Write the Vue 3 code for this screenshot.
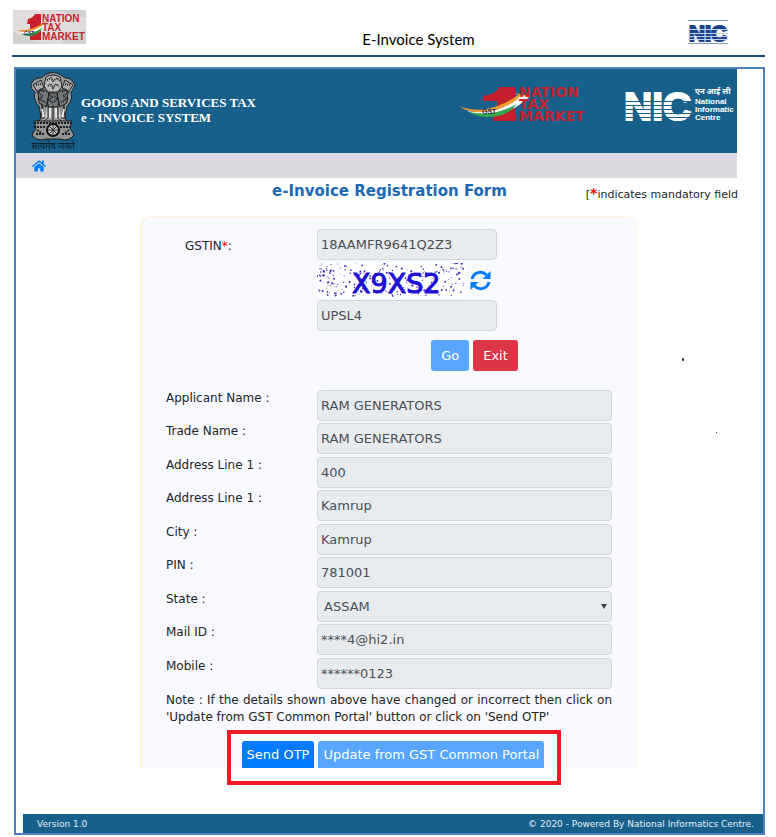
<script setup>
import { ref } from 'vue'

const gstin = ref('18AAMFR9641Q2Z3')
const captcha = ref('UPSL4')

const fields = [
  { id: 'applicant', label: 'Applicant Name :', value: 'RAM GENERATORS' },
  { id: 'trade', label: 'Trade Name :', value: 'RAM GENERATORS' },
  { id: 'address1', label: 'Address Line 1 :', value: '400' },
  { id: 'address2', label: 'Address Line 1 :', value: 'Kamrup' },
  { id: 'city', label: 'City :', value: 'Kamrup' },
  { id: 'pin', label: 'PIN :', value: '781001' },
  { id: 'state', label: 'State :', value: 'ASSAM', select: true },
  { id: 'mail', label: 'Mail ID :', value: '****4@hi2.in' },
  { id: 'mobile', label: 'Mobile :', value: '******0123' },
]

// Deterministic speckle noise behind the captcha characters
let seed = 41
const rand = () => {
  seed = (seed * 16807) % 2147483647
  return seed / 2147483647
}
const dots = Array.from({ length: 220 }, () => ({
  x: rand() * 147,
  y: rand() * 33,
  r: 0.4 + rand() * 0.7,
}))
</script>

<template>
  <div class="page">
    <header class="doc-head">
      <svg class="doc-logo" width="73" height="34" viewBox="0 0 73 34" role="img" aria-label="Nation Tax Market">
        <rect width="73" height="34" fill="#dfdcdb" />
        <path d="M0 22L18 30L36 34H0ZM40 0L73 8V0ZM52 28L73 20V34H48Z" fill="#d3d0d0" />
        <path d="M15 9Q20 8 22 4H28V30H17V14H14Z" fill="#cb1f2c" />
        <path d="M4 20Q18 22 33 11L31 16Q19 27 4 20Z" fill="#f08b25" />
        <path d="M6 22Q20 23 33 13L30 19Q19 28 6 22Z" fill="#fff" />
        <path d="M8 24Q20 25 30 17Q22 31 8 24Z" fill="#2d9a45" />
        <g fill="#c52431" font-family="Liberation Sans, sans-serif" font-weight="700" font-size="10">
          <text x="29" y="12">NATION</text><text x="29" y="21">TAX</text><text x="29" y="30">MARKET</text>
        </g>
        <text x="11" y="25" fill="#26336f" font-family="Liberation Sans, sans-serif" font-weight="700" font-size="5">GST</text>
      </svg>
      <h1>E-Invoice System</h1>
      <svg class="doc-nic" width="40" height="24" viewBox="0 0 40 24" role="img" aria-label="NIC">
        <text x="1" y="21" fill="#1b438b" stroke="#1b438b" stroke-width="2" font-family="Liberation Sans, sans-serif" font-weight="700" font-size="22">NIC</text>
        <path d="M0 .5H40M0 23.5H40" stroke="#7d9ac8" />
        <path d="M0 9.5H40M0 13.5H40M0 16.5H40M0 19.5H40" stroke="#c3d1e6" />
      </svg>
    </header>

    <div class="frame">
      <div class="banner">
        <svg class="emblem" width="48" height="80" viewBox="0 0 48 80" role="img" aria-label="National emblem">
          <g stroke="#1d1f20" stroke-width="1">
            <path d="M16 3Q24-2 32 3L36 6Q42 5 46 13Q44 18 42 20Q44 29 38 34L36 46L39 51H9L12 46L10 34Q4 29 6 20Q1 17 2 12Q6 5 12 6Z" fill="#96999a" />
            <path d="M17 5Q24 1 31 5L33 14L29 20H19L15 14Z" fill="#b8b9b8" />
            <path d="M4 13L12 8L15 16L8 19ZM44 13L36 8L33 16L40 19Z" fill="#aaa" />
            <path d="M9 20Q16 15 20 22L17 35L10 31ZM39 20Q32 15 28 22L31 35L38 31ZM20 21H28L30 35H18Z" fill="#74787a" />
            <path d="M13 33L16 46H12ZM19 32V46L15 49M24 33V48M29 32V46L33 49M35 33L32 46H36Z" fill="#d2d2cf" />
          </g>
          <path d="M8 20L14 24L10 27L16 30M40 20L34 24L38 27L32 30M20 22L23 25L20 28L24 31L28 27L25 23M18 8L22 6L24 9L28 6L31 9M19 14L22 12L24 16L27 12L30 14M7 13L12 12M41 13L36 12M11 17L15 20M37 17L33 20" fill="none" stroke="#222" stroke-width="2" stroke-dasharray="1 1" />
          <path d="M13 37L15 45M21 36V46M27 36V46M35 37L33 45" stroke="#e5e5e0" stroke-width="2" />
          <path d="M5 49H43L41 56L45 63Q40 70 31 67H17Q8 70 3 63L7 56Z" fill="#929594" stroke="#191b1c" />
          <path d="M5 51H43M5 55H17M31 55H43M7 62H15M33 62H41M8 58L12 61M40 58L36 61" stroke="#1c1e1f" stroke-width="2" stroke-dasharray="2 1" />
          <circle cx="24" cy="58" r="6" fill="#c4c5c3" stroke="#111" stroke-width="2" />
          <path d="M24 53V63M19 58H29M20 54L28 62M28 54L20 62" stroke="#333" stroke-width="1" />
          <text x="24" y="77" text-anchor="middle" font-size="9" fill="#111820" font-family="Noto Sans Devanagari, Noto Sans, sans-serif">सत्यमेव जयते</text>
        </svg>
        <p class="brand">GOODS AND SERVICES TAX<br />e - INVOICE SYSTEM</p>
        <svg class="market" width="154" height="38" viewBox="0 0 154 38" role="img" aria-label="GST Nation Tax Market">
          <path d="M25 10Q39 8 41 1H57V28H58V35H35V28H39V15H25Z" fill="#c51f2d" />
          <path d="M1 20Q21 28 42 19Q54 14 60 9L56 7L72 10L67 15L64 12Q48 25 27 27Q10 27 1 20Z" fill="#f19a31" />
          <path d="M9 25Q31 29 48 20Q58 16 62 10L71 11L66 15Q52 28 28 29Q17 29 9 25Z" fill="#fff" />
          <path d="M11 26Q36 31 59 18Q48 32 28 31Q17 30 11 26Z" fill="#36a64b" />
          <text x="24" y="28" font-family="Liberation Sans, sans-serif" font-size="7" font-weight="700" fill="#252e65">GST</text>
          <g fill="#c5212f" font-family="DejaVu Sans, sans-serif" font-weight="700" font-size="14">
            <text x="61" y="11">NATION</text><text x="61" y="23">TAX</text><text x="61" y="35">MARKET</text>
          </g>
        </svg>
        <svg class="nic" width="113" height="42" viewBox="0 0 113 42" role="img" aria-label="NIC National Informatics Centre">
          <text x="0" y="38" fill="#fff" stroke="#fff" stroke-width="2" font-family="Liberation Sans, sans-serif" font-weight="700" font-size="39">NIC</text>
          <path d="M0 19.500H69M0 23.500H69M0 27.500H69M0 31.500H69M0 35.500H69" stroke="#17608b" />
          <g fill="#fff" font-family="Liberation Sans, sans-serif" font-weight="700" font-size="8">
            <text x="71" y="12" font-family="Noto Sans Devanagari, Noto Sans, sans-serif">एन आई सी</text>
            <text x="71" y="22">National</text><text x="71" y="30">Informatic</text><text x="71" y="38">Centre</text>
          </g>
        </svg>
      </div>
      <nav class="nav">
        <a href="#" aria-label="Home">
          <svg width="14" height="12" viewBox="0 0 576 448" fill="#007bff">
            <path d="M280 84L96 235V400Q96 416 112 416L224 415Q240 415 240 399V305Q240 289 256 289H320Q336 289 336 305V399Q336 416 352 416H464Q480 416 480 400V235L296 84Q288 79 280 84ZM571 187L488 118V-20Q488-32 476-32H420Q408-32 408-20V53L318-21Q288-43 258-21L4 187Q-4 195 2 204L28 235Q36 243 45 236L280 42Q288 37 296 42L531 236Q540 243 548 235L573 204Q580 195 571 187Z" transform="translate(0 32)" />
          </svg>
        </a>
      </nav>

      <main class="content">
        <div class="heading">
          <h2>e-Invoice Registration Form</h2>
          <span class="mandatory">[<b>*</b>indicates mandatory field</span>
        </div>
        <span class="speck speck-a"></span>
        <span class="speck speck-b"></span>

        <div class="card-wrap">
          <form class="card" @submit.prevent>
            <div class="row first">
              <label class="gst-label" for="gstin">GSTIN<b>*</b>:</label>
              <div class="verify">
                <input id="gstin" v-model="gstin" disabled />
                <div class="captcha">
                  <svg width="149" height="34" viewBox="0 0 149 34" role="img" aria-label="Captcha">
                    <rect width="149" height="34" fill="#fff" />
                    <circle v-for="(d, i) in dots" :key="i" :cx="d.x" :cy="d.y" :r="d.r" fill="#3d2fc0" />
                    <text x="35" y="30" font-family="DejaVu Sans, sans-serif" font-size="27" fill="#1c0fd6" stroke="#1c0fd6">X9XS2</text>
                  </svg>
                  <button type="button" class="refresh" aria-label="Refresh captcha">
                    <svg width="21" height="21" viewBox="0 0 21 21" fill="none" stroke="#007bff" stroke-width="3">
                      <path d="M2 9A8.5 8.5 0 0 1 16.5 5" /><path d="M19 12A8.5 8.5 0 0 1 4.500 16" />
                      <path d="M20.500 1V9H12.500ZM.5 20V12H8.500Z" fill="#007bff" stroke="none" />
                    </svg>
                  </button>
                </div>
                <input v-model="captcha" aria-label="Captcha text" disabled />
              </div>
            </div>
            <div class="actions">
              <button type="button" class="btn light">Go</button>
              <button type="button" class="btn danger">Exit</button>
            </div>

            <div class="fields">
              <div v-for="f in fields" :key="f.id" class="row">
                <label :for="f.id">{{ f.label }}</label>
                <div v-if="f.select" class="select">
                  <select :id="f.id" disabled><option>{{ f.value }}</option></select>
                  <span class="arrow"></span>
                </div>
                <input v-else :id="f.id" :value="f.value" disabled />
              </div>
            </div>
            <p class="note">Note : If the details shown above have changed or incorrect then click on 'Update from GST Common Portal' button or click on 'Send OTP'</p>
            <div class="submit">
              <button type="button" class="btn primary">Send OTP</button>
              <button type="button" class="btn light">Update from GST Common Portal</button>
              <span class="highlight"></span>
            </div>
          </form>
        </div>
      </main>
      <footer class="foot">
        <span>Version 1.0</span>
        <span>© 2020 - Powered By National Informatics Centre.</span>
      </footer>
    </div>
  </div>
</template>

<style>
body { margin: 0; background: #fff; }
</style>

<style scoped>
* { box-sizing: border-box; }
.page { padding: 0 11px 2px 12px; font-family: "DejaVu Sans", Verdana, sans-serif; color: #212529; }
.doc-head { display: grid; grid-template-columns: 1fr auto 1fr; align-items: start; padding: 10px 0 0; height: 57px; border-bottom: 2px solid #1f497d; }
.doc-logo { margin-left: 1px; }
.doc-head h1 { margin: 19px 0 0; padding-left: 60px; font: 400 15px/20px Lato, Calibri, sans-serif; color: #000; }
.doc-nic { justify-self: end; margin: 10px 37px 0 0; }
.frame { margin: 10px 0 0 2px; border: 2px solid #4f81bd; }
.banner { display: flex; align-items: flex-start; margin-right: 26px; padding: 3px 0 0 13px; height: 84px; background: #17608b; overflow: hidden; }
.emblem { flex: none; overflow: visible; }
.brand { margin: 23px 0 0 4px; font: 700 13px/15px "Liberation Serif", serif; color: #fff; white-space: nowrap; }
.market { flex: none; margin: 14px 12px 0 auto; }
.nic { flex: none; margin-top: 10px; }
.nav { display: flex; align-items: center; margin-right: 26px; padding-left: 16px; height: 25px; background: #d9dbe0; }
.nav a { display: flex; }
.content { position: relative; }
.heading { display: flex; align-items: flex-start; justify-content: space-between; padding: 4px 25px 0 256px; height: 38px; }
.heading h2 { margin: 0; font-size: 15px; line-height: 18px; color: #1a69b5; white-space: nowrap; }
.mandatory { padding-top: 4px; font-size: 11px; line-height: 18px; white-space: nowrap; }
.mandatory b { font-size: 14px; line-height: 1; color: #f00; }
.speck { position: absolute; border-radius: 50%; background: #111; }
.speck-a { top: 180px; right: 79px; width: 2px; height: 3px; }
.speck-b { top: 254px; right: 46px; width: 1px; height: 1px; }
.card-wrap { padding: 0 126px 0 124px; }
.card { padding: 12px 24px 0; border: solid #fcf2dc; border-width: 1px 1px 0 2px; border-radius: 10px 10px 0 0; background: #f8f9fc; }
.row { display: grid; grid-template-columns: 151px 1fr; align-items: start; }
.row label { font-size: 12px; line-height: 17px; }
.row .gst-label { padding: 9px 0 0 19px; }
.gst-label b { font-weight: 400; color: #f00; }
input, select { width: 100%; height: 31px; padding: 0 3px; border: 1px solid #d3d7dc; border-radius: 4px; background: #e8ebee; font: 13px "DejaVu Sans", Verdana, sans-serif; color: #495057; opacity: 1; }
.verify { display: grid; gap: 3px; max-width: 180px; }
.captcha { display: flex; align-items: center; gap: 4px; }
.refresh { display: flex; padding: 0; border: 0; background: none; }
.actions { display: flex; justify-content: center; gap: 4px; padding: 9px 0 19px 171px; }
.btn { flex: none; height: 31px; padding: 0 5px; border: 0; border-radius: 3px; font: 13px "DejaVu Sans", Verdana, sans-serif; color: #fff; white-space: nowrap; }
.actions .btn { padding: 0 10px; }
.light { background: #58a6ff; }
.danger { background: #dc3545; }
.primary { background: #007bff; }
.fields { display: grid; gap: 2px; }
.fields .row:nth-child(even) { padding-bottom: 1px; }
.select { position: relative; }
.select select { appearance: none; padding-left: 6px; }
.arrow { position: absolute; top: 13px; right: 5px; border: solid transparent; border-width: 5px 3px 0; border-top-color: #3b4147; }
.note { margin: 3px 0 0; font-size: 12px; line-height: 17px; text-align: justify; }
.submit { position: relative; display: flex; justify-content: center; gap: 4px; margin: 15px 0 0; padding-left: 8px; }
.submit .btn { height: 27px; border-radius: 3px 3px 0 0; }
.highlight { position: absolute; inset: -11px 51px -17px 61px; border: 4px solid #ed1c24; }
.foot { display: flex; align-items: center; justify-content: space-between; margin: 46px 0 0 7px; padding: 0 9px 0 14px; height: 19px; background: #17608b; font-size: 9px; color: #e5eff5; }
</style>
